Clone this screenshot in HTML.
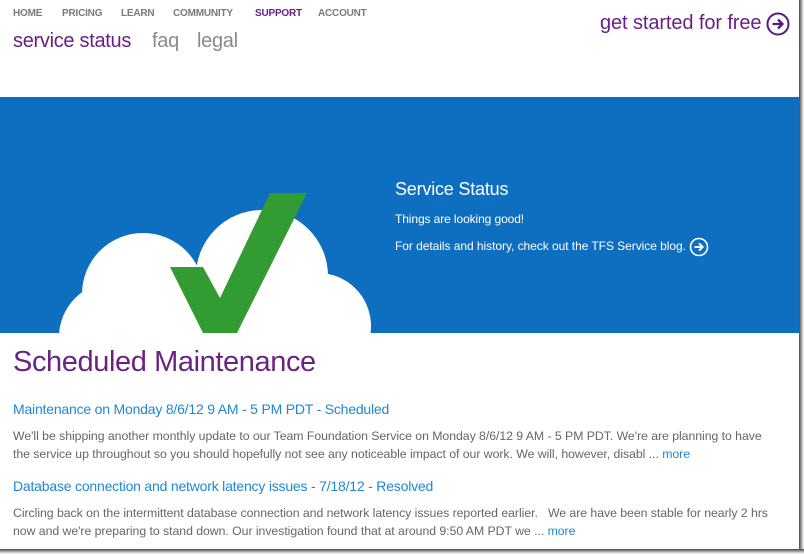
<!DOCTYPE html>
<html><head><meta charset="utf-8"><style>
*{margin:0;padding:0;box-sizing:border-box}
body{width:804px;height:554px;background:#fff;font-family:"Liberation Sans",sans-serif;position:relative;overflow:hidden}
.a{position:absolute;white-space:nowrap}
.nav{top:8px;font-size:10px;font-weight:bold;color:#7a7a7a;letter-spacing:-0.2px}
.sub{top:30px;font-size:20px;color:#8a8a8a;letter-spacing:-0.3px}
.p{color:#6b1f86}
.lnk{font-size:14px;color:#1e88d2;letter-spacing:-0.2px}
.txt{font-size:12.3px;color:#666;letter-spacing:-0.05px}
.txt b{font-weight:normal;color:#1e88d2}
</style></head><body>
<div class="a nav" style="left:13px">HOME</div>
<div class="a nav" style="left:62px">PRICING</div>
<div class="a nav" style="left:121px">LEARN</div>
<div class="a nav" style="left:173px">COMMUNITY</div>
<div class="a nav p" style="left:255px">SUPPORT</div>
<div class="a nav" style="left:318px">ACCOUNT</div>
<div class="a sub p" style="left:13px">service status</div>
<div class="a sub" style="left:152px">faq</div>
<div class="a sub" style="left:197px">legal</div>
<div class="a p" style="left:600px;top:12px;font-size:20px;letter-spacing:-0.1px">get started for free</div>
<svg class="a" style="left:766px;top:12px" width="24" height="24" viewBox="0 0 24 24"><circle cx="12" cy="12" r="10.5" fill="none" stroke="#5a1a7a" stroke-width="2"/><path d="M6.5 12H16M12 7.5L16.5 12L12 16.5" fill="none" stroke="#5a1a7a" stroke-width="2.3"/></svg>

<div class="a" style="left:0;top:97px;width:800px;height:236px;background:#0e6fc1;overflow:hidden">
<svg width="800" height="236" style="position:absolute;left:0;top:0">
<g fill="#fff" transform="translate(0,-97)">
<circle cx="262" cy="276" r="66"/>
<circle cx="143" cy="294" r="61"/>
<circle cx="114" cy="337" r="55"/>
<circle cx="318" cy="326" r="53"/>
<rect x="100" y="300" width="230" height="40"/>
</g>
<polygon transform="translate(0,-97)" fill="#329c33" points="170,267 203,267 220,298 270,193 307,193 237,333 203,333"/>
</svg>
<div class="a" style="left:395px;top:82px;font-size:18px;color:#fff;letter-spacing:-0.2px">Service Status</div>
<div class="a" style="left:395px;top:115px;font-size:12px;color:#fff;letter-spacing:-0.1px">Things are looking good!</div>
<div class="a" style="left:395px;top:142px;font-size:12px;color:#fff;letter-spacing:-0.05px">For details and history, check out the TFS Service blog.</div>
<svg class="a" style="left:689px;top:140px" width="20" height="20" viewBox="0 0 20 20"><circle cx="10" cy="10" r="8.5" fill="none" stroke="#fff" stroke-width="1.6"/><path d="M5.5 10H13.5M10 6.3L13.7 10L10 13.7" fill="none" stroke="#fff" stroke-width="1.9"/></svg>
</div>

<div class="a p" style="left:13px;top:346px;font-size:29px;letter-spacing:-0.4px;color:#6b2383">Scheduled Maintenance</div>
<div class="a lnk" style="left:13px;top:401px">Maintenance on Monday 8/6/12 9 AM - 5 PM PDT - Scheduled</div>
<div class="a txt" style="left:13px;top:429px">We'll be shipping another monthly update to our Team Foundation Service on Monday 8/6/12 9 AM - 5 PM PDT. We're are planning to have</div>
<div class="a txt" style="left:13px;top:447px">the service up throughout so you should hopefully not see any noticeable impact of our work. We will, however, disabl ... <b>more</b></div>
<div class="a lnk" style="left:13px;top:478px">Database connection and network latency issues - 7/18/12 - Resolved</div>
<div class="a txt" style="left:13px;top:506px">Circling back on the intermittent database connection and network latency issues reported earlier.&nbsp;&nbsp; We are have been stable for nearly 2 hrs</div>
<div class="a txt" style="left:13px;top:524px">now and we're preparing to stand down. Our investigation found that at around 9:50 AM PDT we ... <b>more</b></div>

<div class="a" style="left:799px;top:0;width:5px;height:554px;background:linear-gradient(90deg,#444,#bbb 60%,#fff)"></div>
<div class="a" style="left:0;top:549px;width:804px;height:5px;background:linear-gradient(180deg,#444,#bbb 60%,#fff)"></div>
</body></html>
